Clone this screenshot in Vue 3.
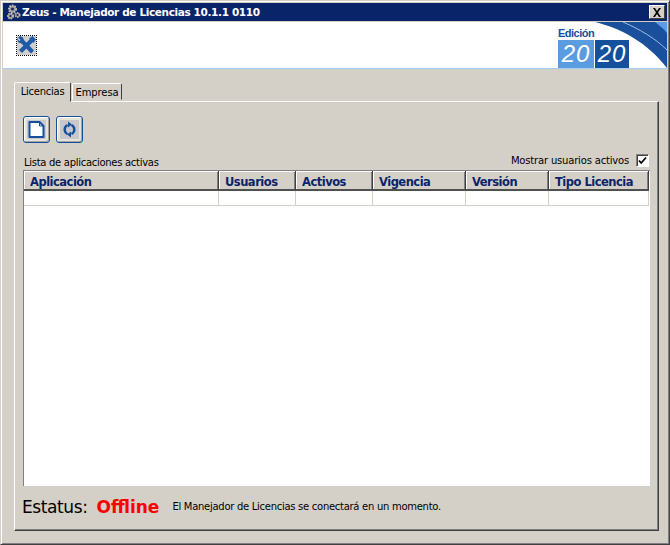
<script setup>
const columns = [
  { name: 'Aplicación', width: 195 },
  { name: 'Usuarios', width: 77 },
  { name: 'Activos', width: 77 },
  { name: 'Vigencia', width: 93 },
  { name: 'Versión', width: 83 },
  { name: 'Tipo Licencia', width: 100 }
]
</script>

<template>
  <div class="window">
    <div class="titlebar">
      <svg class="gears" width="16" height="16" viewBox="0 0 16 16">
        <circle cx="6.500" cy="5" r="3.400" fill="#8c8a84" stroke="#c4c1b9" stroke-width="2.200" stroke-dasharray="1.600 .9" />
        <circle cx="6.500" cy="5" r="1.300" fill="#0a246a" />
        <circle cx="4.500" cy="12" r="2.500" fill="#8c8a84" stroke="#c4c1b9" stroke-width="2" stroke-dasharray="1.500 .8" />
        <circle cx="4.500" cy="12" r="1" fill="#0a246a" />
        <circle cx="11.500" cy="11" r="2.200" fill="#8c8a84" stroke="#b5b2aa" stroke-width="1.800" stroke-dasharray="1.400 .8" />
        <circle cx="11.500" cy="11" r=".9" fill="#0a246a" />
      </svg>
      <span class="title">Zeus - Manejador de Licencias 10.1.1 0110</span>
      <button class="close">
        <svg width="10" height="9" viewBox="0 0 10 9"><path d="M1 0h2l2 3 2-3h2L6 4.500 9 9H7L5 6 3 9H1l3-4.500z" fill="#000" /></svg>
      </button>
    </div>

    <div class="header">
      <button class="tool-btn">
        <svg width="19" height="19" viewBox="0 0 19 19">
          <rect width="19" height="19" fill="#cfcfcf" />
          <path d="M4.500 4.500 15.500 16" stroke="#1f5aa6" stroke-width="4.200" fill="none" />
          <path d="M0 3 3 0l3 1.500 1 3.500-2.500 2.500L1.500 6.500z" fill="#1f5aa6" />
          <path d="M15 4 3.500 15.500" stroke="#1f5aa6" stroke-width="4.200" fill="none" />
          <path d="M12 2.500 15.500 0 19 3.500 16.500 7z" fill="#1f5aa6" />
          <path d="M1 2.500 3 4.500" stroke="#cfcfcf" stroke-width="1.400" />
        </svg>
      </button>
      <div class="brand">
        <div class="edition">
          <span class="edition-label">Edición</span>
          <div class="year"><span class="light">20</span><span class="dark">20</span></div>
        </div>
      </div>
      <svg class="swoosh" width="72" height="46" viewBox="0 0 72 46">
        <path d="M0 0C25 6 52 20 72 46V0Z" fill="#1a4f9c" />
        <path d="M28 0C44 7 60 16 72 28" fill="none" stroke="#9dbde6" stroke-width="1" />
        <path d="M60 0C64 3 69 7 72 11V0Z" fill="#5b9be0" />
      </svg>
    </div>

    <div class="body">
      <div class="tabs">
        <div class="tab active">Licencias</div>
        <div class="tab">Empresa</div>
      </div>
      <div class="pane">
        <div class="toolbar">
          <button class="square-btn">
            <svg width="19" height="19" viewBox="0 0 19 19">
              <rect width="19" height="19" fill="#c8c8cc" />
              <path d="M2.500 2h10l4 4v11h-14z" fill="#fff" stroke="#14509c" stroke-width="2" stroke-linejoin="round" />
              <path d="M12.500 2v4h4" fill="none" stroke="#14509c" stroke-width="1" />
            </svg>
          </button>
          <button class="square-btn">
            <svg width="19" height="19" viewBox="0 0 19 19">
              <rect width="19" height="19" fill="#c8c8cc" />
              <path d="M7.500 5A5 5 0 0 0 7.500 14M11.500 14A5 5 0 0 0 11.500 5" fill="none" stroke="#14509c" stroke-width="2.400" />
              <path d="M8 1.500 12 4.500 8 7.500zM11 11.500 7 14.500 11 17.500z" fill="#14509c" />
            </svg>
          </button>
        </div>

        <div class="list-head">
          <span>Lista de aplicaciones activas</span>
          <label class="check-row">
            <span>Mostrar usuarios activos</span>
            <span class="check">
              <svg width="9" height="9" viewBox="0 0 9 9"><path d="M1 4.500 3.200 7 8 1.500" fill="none" stroke="#000" stroke-width="1.800" /></svg>
            </span>
          </label>
        </div>

        <div class="grid">
          <div class="grid-head">
            <div v-for="c in columns" :key="c.name" class="col-head" :style="{ width: c.width + 'px' }">{{ c.name }}</div>
          </div>
          <div class="grid-row">
            <div v-for="c in columns" :key="c.name" class="cell" :style="{ width: c.width + 'px' }"></div>
          </div>
        </div>

        <div class="status">
          <span class="status-label">Estatus:</span>
          <span class="status-value">Offline</span>
          <span class="status-msg">El Manejador de Licencias se conectará en un momento.</span>
        </div>
      </div>
    </div>
  </div>
</template>

<style>
html, body { margin: 0; padding: 0; background: #d4d0c8; }
</style>

<style scoped>
.window {
  width: 670px;
  height: 545px;
  box-sizing: border-box;
  background: #d4d0c8;
  border-top: 1px solid #d4d0c8;
  border-left: 1px solid #d4d0c8;
  border-right: 1px solid #404040;
  border-bottom: 1px solid #404040;
  padding: 2px;
  display: flex;
  flex-direction: column;
  font-family: "DejaVu Sans", sans-serif;
  color: #000;
  box-shadow: inset 1px 1px 0 #fff, inset -1px -1px 0 #808080;
}
.titlebar {
  height: 18px;
  flex: none;
  background: #0a246a;
  display: flex;
  align-items: center;
  color: #fff;
  padding: 0 2px 0 3px;
}
.gears { flex: none; }
.title {
  font-size: 10.5px;
  letter-spacing: -0.37px;
  font-weight: 700;
  white-space: nowrap;
  flex: 1;
}
.close {
  width: 16px;
  height: 14px;
  padding: 0;
  background: #d4d0c8;
  border: 1px solid;
  border-color: #fff #404040 #404040 #fff;
  display: flex;
  align-items: center;
  justify-content: center;
}
.header {
  position: relative;
  height: 46px;
  flex: none;
  margin-top: 1px;
  background: #fff;
  border-bottom: 1px solid #a6caf0;
  display: flex;
  align-items: flex-start;
  justify-content: space-between;
  overflow: hidden;
}
.tool-btn {
  width: 21px;
  height: 21px;
  margin: 13px 0 0 13px;
  padding: 0;
  background: #fff;
  border: 1px dotted #000;
  display: flex;
  align-items: center;
  justify-content: center;
}
.brand { margin-right: 38px; padding-top: 5px; position: relative; z-index: 1; }
.edition { display: flex; flex-direction: column; }
.edition-label {
  font-family: "Liberation Sans", sans-serif;
  font-size: 11px;
  font-weight: 700;
  color: #14509c;
  line-height: 13px;
  letter-spacing: -0.5px;
}
.year { display: flex; gap: 1px; }
.year span {
  height: 28px;
  line-height: 28px;
  text-align: center;
  font-family: "Liberation Sans", sans-serif;
  font-style: italic;
  font-size: 24px;
  letter-spacing: 1px;
  color: #fff;
}
.light { width: 36px; background: #5b9be0; }
.dark { width: 34px; background: #14509c; }
.swoosh { position: absolute; right: 0; top: 0; }
.body {
  flex: 1;
  min-height: 0;
  padding: 13px 8px 11px 11px;
  display: flex;
  flex-direction: column;
}
.tabs {
  display: flex;
  align-items: flex-end;
  height: 19px;
  flex: none;
  position: relative;
  z-index: 1;
}
.tab {
  box-sizing: border-box;
  height: 17px;
  width: 50px;
  font-size: 10px;
  letter-spacing: -0.1px;
  line-height: 18px;
  text-align: center;
  border: 1px solid;
  border-color: #fff #404040 transparent #fff;
  border-radius: 2px 2px 0 0;
  background: #d4d0c8;
  margin-bottom: 1px;
}
.tab.active {
  width: 57px;
  height: 20px;
  line-height: 17px;
  letter-spacing: -0.25px;
  margin-bottom: -1px;
  margin-right: 1px;
}
.pane {
  flex: 1;
  min-height: 0;
  box-sizing: border-box;
  background: #d4d0c8;
  border: 1px solid;
  border-color: #fff #404040 #404040 #fff;
  box-shadow: inset -1px -1px 0 #808080;
  padding: 14px 8px 0 8px;
  display: flex;
  flex-direction: column;
}
.toolbar { display: flex; gap: 6px; flex: none; }
.square-btn {
  width: 27px;
  height: 27px;
  padding: 0;
  background: #e6e3dd;
  border: 1px solid #14509c;
  border-radius: 3px;
  box-shadow: inset 1px 1px 0 #fff, inset -1px -1px 0 #a8a49c;
  display: flex;
  align-items: center;
  justify-content: center;
}
.list-head {
  flex: none;
  margin-top: 11px;
  height: 16px;
  display: flex;
  justify-content: space-between;
  align-items: center;
  font-size: 10px;
  letter-spacing: -0.29px;
  padding: 0 1px 0 1px;
}
.check-row { display: flex; align-items: center; gap: 7px; margin-top: -4px; letter-spacing: -0.18px; }
.check {
  width: 13px;
  height: 13px;
  box-sizing: border-box;
  background: #fff;
  border: 1px solid;
  border-color: #808080 #fff #fff #808080;
  box-shadow: inset 1px 1px 0 #404040;
  display: flex;
  align-items: center;
  justify-content: center;
}
.grid {
  width: 627px;
  height: 316px;
  flex: none;
  box-sizing: border-box;
  background: #fff;
  border-top: 1px solid #808080;
  border-left: 1px solid #808080;
  display: flex;
  flex-direction: column;
}
.grid-head { display: flex; flex: none; }
.col-head {
  box-sizing: border-box;
  height: 20px;
  flex: none;
  background: #d4d0c8;
  border-right: 1px solid #404040;
  border-bottom: 2px solid #505050;
  box-shadow: inset 1px 1px 0 #fff, inset -1px 0 0 #808080;
  color: #0a246a;
  font-size: 11.5px;
  font-weight: 700;
  letter-spacing: -0.5px;
  line-height: 20px;
  padding: 1px 0 0 6px;
  white-space: nowrap;
}
.grid-row { display: flex; flex: none; }
.cell {
  box-sizing: border-box;
  height: 15px;
  flex: none;
  border-right: 1px solid #d4d0c8;
  border-bottom: 1px solid #d4d0c8;
}
.status {
  flex: 1;
  display: flex;
  align-items: center;
  padding-bottom: 3px;
  white-space: nowrap;
}
.status-label { font-size: 17px; letter-spacing: -0.4px; margin-left: -1px; }
.status-value {
  font-size: 17px;
  font-weight: 700;
  color: #ff0000;
  margin-left: 9px;
}
.status-msg { font-size: 10px; letter-spacing: -0.28px; margin-left: 13px; }
</style>
